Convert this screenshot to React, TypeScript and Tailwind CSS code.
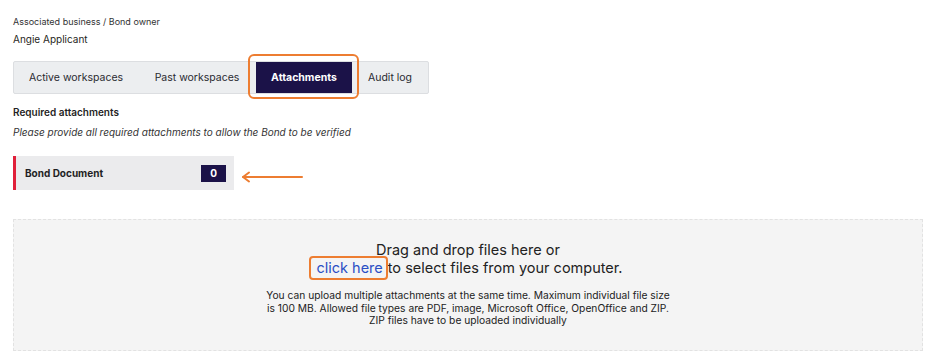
import React from 'react'

const tabs = [
  { label: 'Active workspaces', w: 'w-[124px]' },
  { label: 'Past workspaces', w: 'w-[118px]' },
  { label: 'Attachments', w: 'w-[96px]' },
  { label: 'Audit log', w: 'w-[76px]' },
]

export default function App() {
  return (
    <main className="w-[936px] h-[361px] bg-white text-[#1f1f24] font-['Inter','Noto_Sans',sans-serif] px-[13px] pt-[16px] overflow-hidden">
      <div className="text-[9px] leading-[12px] text-[#333]">Associated business / Bond owner</div>
      <div className="text-[10px] leading-[14px] mt-[4px]">Angie Applicant</div>

      <div className="mt-[15px] flex w-[416px] h-[33px] bg-[#eceef0] border border-[#dcdee1] rounded-[2px]">
        {tabs.map((t) =>
          t.label === 'Attachments' ? (
            <div key={t.label} className={`relative flex items-center justify-center ${t.w} bg-[#1b1248] text-white text-[10.5px] font-bold whitespace-nowrap`}>
              {t.label}
              <span className="absolute -left-[8px] -top-[8px] -right-[7px] -bottom-[6px] border-2 border-[#ed7d31] rounded-[6px]" />
            </div>
          ) : (
            <div key={t.label} className={`flex items-center justify-center ${t.w} text-[10.5px] text-[#2a2a30] whitespace-nowrap`}>
              {t.label}
            </div>
          )
        )}
      </div>

      <div className="mt-[11px] text-[10px] font-semibold leading-[14px]">Required attachments</div>
      <div className="mt-[6px] text-[10px] italic leading-[14px] text-[#333]">
        Please provide all required attachments to allow the Bond to be verified
      </div>

      <div className="mt-[17px] flex items-center gap-[6px]">
        <div className="flex items-center justify-between w-[221px] h-[34px] bg-[#ebebed] border-l-[3px] border-[#e0203a] pl-[9px] pr-[8px]">
          <span className="text-[10px] font-bold">Bond Document</span>
          <span className="flex items-center justify-center w-[25px] h-[17px] bg-[#1b1248] text-white text-[10px] font-bold">0</span>
        </div>
        <svg width="64" height="12" viewBox="0 0 64 12" className="mt-[8px]">
          <path d="M3 6 H62" stroke="#ed7d31" strokeWidth="2" strokeLinecap="round" />
          <path d="M9 1.5 L3 6 L9 10.5" stroke="#ed7d31" strokeWidth="2" fill="none" strokeLinecap="round" strokeLinejoin="round" />
        </svg>
      </div>

      <div className="mt-[29px] w-[910px] h-[132px] bg-[#f4f4f4] border border-dashed border-[#e2e2e2] flex flex-col items-center pt-[21px]">
        <div className="text-[14.5px] leading-[18px] text-[#222]">Drag and drop files here or</div>
        <div className="text-[14.5px] leading-[18px] text-[#222]">
          <span className="relative text-[#2b4fc4] pl-[3px] pr-[5px]">
            click here
            <span className="absolute -left-[4px] -top-[3px] right-0 -bottom-[4px] border-2 border-[#ed7d31] rounded-[4px]" />
          </span>
          to select files from your computer.
        </div>
        <div className="mt-[12px] text-[10.25px] leading-[12.5px] text-[#222] text-center">
          You can upload multiple attachments at the same time. Maximum individual file size
          <br />
          is 100 MB. Allowed file types are PDF, image, Microsoft Office, OpenOffice and ZIP.
          <br />
          ZIP files have to be uploaded individually
        </div>
      </div>
    </main>
  )
}
